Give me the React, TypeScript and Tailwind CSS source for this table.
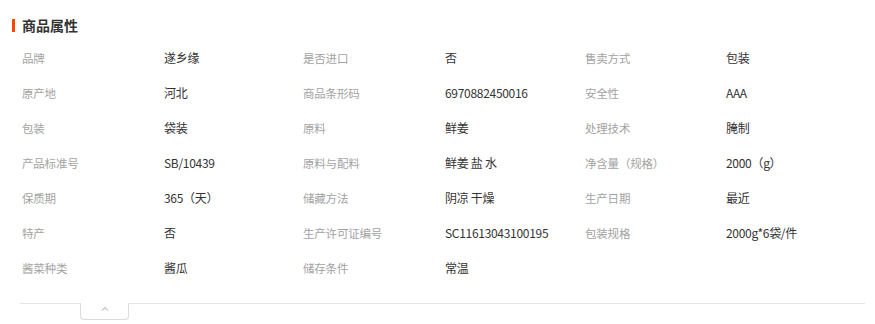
const rows: [string, string, string, string, string, string][] = [
  ["品牌", "遂乡缘", "是否进口", "否", "售卖方式", "包装"],
  ["原产地", "河北", "商品条形码", "6970882450016", "安全性", "AAA"],
  ["包装", "袋装", "原料", "鲜姜", "处理技术", "腌制"],
  ["产品标准号", "SB/10439", "原料与配料", "鲜姜 盐 水", "净含量（规格）", "2000（g）"],
  ["保质期", "365（天）", "储藏方法", "阴凉 干燥", "生产日期", "最近"],
  ["特产", "否", "生产许可证编号", "SC11613043100195", "包装规格", "2000g*6袋/件"],
  ["酱菜种类", "酱瓜", "储存条件", "常温", "", ""],
];

export default function App() {
  return (
    <div className="w-[875px] h-[324px] bg-white overflow-hidden font-['Noto_Sans_CJK_SC',sans-serif]">
      {/* HEADER */}
      <div className="flex items-center pt-[18px] pl-[12px]">
        <span className="w-[3px] h-[13px] bg-[#ff4400]" />
        <h2 className="ml-[7px] text-[14px] leading-[14px] font-bold text-[#333]">商品属性</h2>
      </div>

      {/* ATTRIBUTES */}
      <div className="mt-[8px] pl-[22px]">
        {rows.map((r, i) => (
          <div key={i} className="grid grid-cols-[142px_139px_142px_140px_141px_1fr] h-[35px] items-center leading-[16px]">
            <span className="text-[11.5px] text-[#a3a3a3] tracking-[-0.2px]">{r[0]}</span>
            <span className="text-[12px] text-[#333] tracking-[-0.3px]">{r[1]}</span>
            <span className="text-[11.5px] text-[#a3a3a3] tracking-[-0.2px]">{r[2]}</span>
            <span className="text-[12px] text-[#333] tracking-[-0.3px]">{r[3]}</span>
            <span className="text-[11.5px] text-[#a3a3a3] tracking-[-0.2px]">{r[4]}</span>
            <span className="text-[12px] text-[#333] tracking-[-0.3px]">{r[5]}</span>
          </div>
        ))}
      </div>

      {/* FOOTER */}
      <div className="mt-[18px] ml-[20px] mr-[10px] border-t border-[#e5e5e5]">
        <div className="ml-[60px] -mt-px w-[49px] h-[17px] bg-white border border-t-0 border-[#dcdcdc] rounded-b-[4px] flex justify-center">
          <svg width="8" height="5" viewBox="0 0 8 5" className="mt-[3px]" fill="none">
            <path d="M1 4.5L4 1.5L7 4.5" stroke="#8a9bb0" strokeWidth="1" />
          </svg>
        </div>
      </div>
    </div>
  );
}
